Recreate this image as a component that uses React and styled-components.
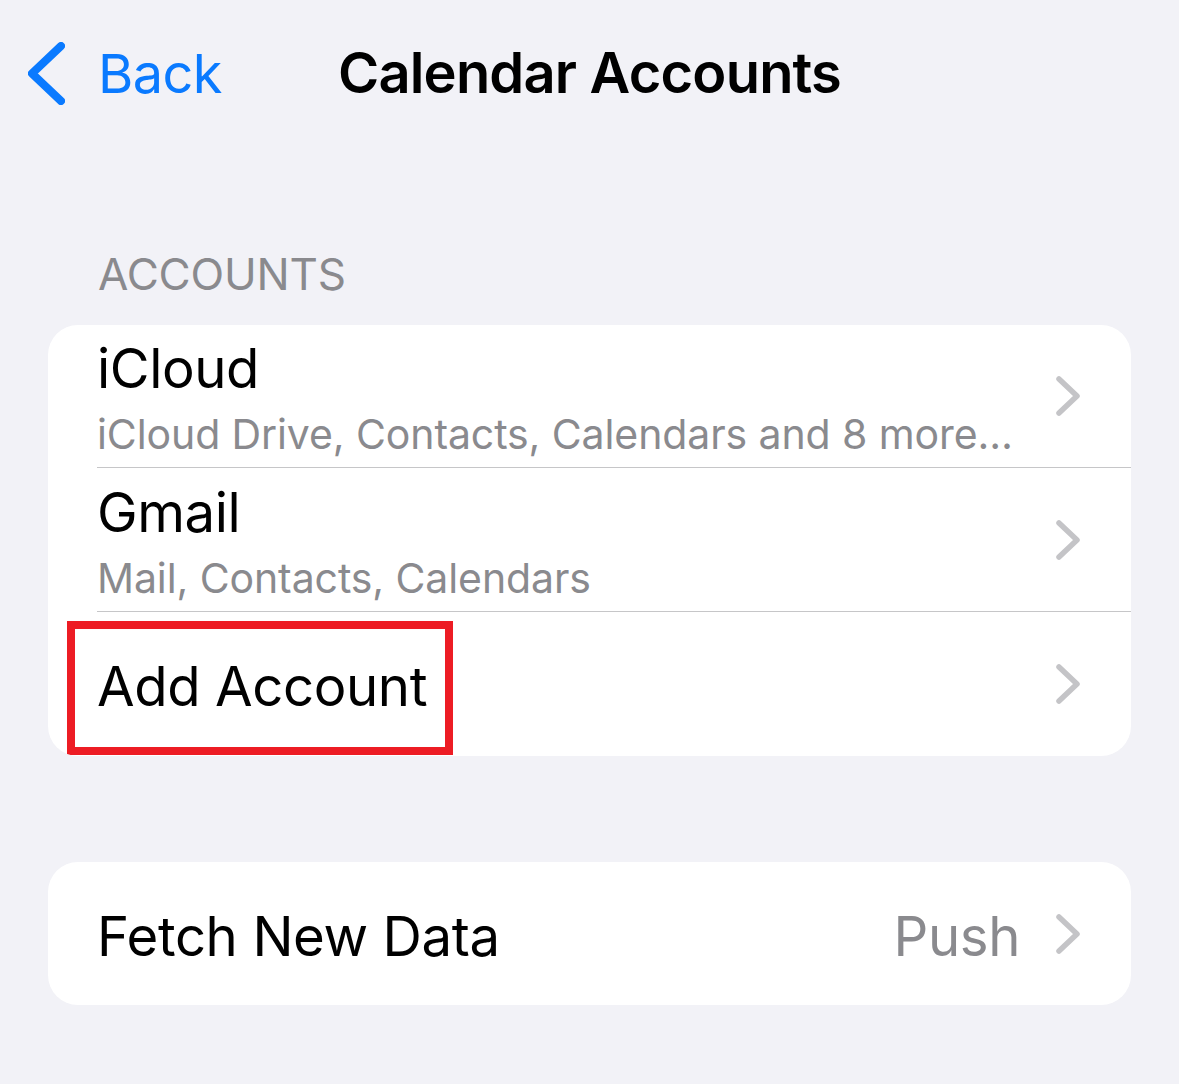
import React from "react";
import styled, { createGlobalStyle } from "styled-components";

const Global = createGlobalStyle`
  html, body {
    margin: 0;
    padding: 0;
    background: #f2f2f7;
  }
  body {
    font-family: Inter, "Noto Sans", "Liberation Sans", sans-serif;
    -webkit-font-smoothing: antialiased;
  }
`;

const Page = styled.div`
  width: 1179px;
  min-height: 1084px;
  background: #f2f2f7;
  display: flex;
  flex-direction: column;
`;

const NavBar = styled.header`
  display: grid;
  grid-template-columns: 1fr auto 1fr;
  align-items: center;
  height: 146px;
`;

const BackButton = styled.button`
  justify-self: start;
  display: flex;
  align-items: center;
  gap: 33px;
  padding: 0 0 0 28px;
  margin: 0;
  border: 0;
  background: none;
  color: #0a7aff;
  font-family: inherit;
  font-size: 54px;
  font-weight: 400;
  letter-spacing: -0.6px;
  cursor: pointer;
`;

const Title = styled.h1`
  margin: 0;
  font-size: 56px;
  font-weight: 600;
  letter-spacing: -0.8px;
  color: #000;
`;

const SectionHeader = styled.div`
  margin: 98px 0 0 98px;
  font-size: 44px;
  line-height: 60px;
  color: #8a8a8e;
  letter-spacing: -0.2px;
`;

const Card = styled.section`
  margin: ${(p) => p.$top}px 48px 0 48px;
  background: #fff;
  border-radius: 30px;
  overflow: hidden;
`;

const Row = styled.div`
  position: relative;
  display: flex;
  padding-left: 49px;
`;

const RowBody = styled.div`
  flex: 1;
  display: flex;
  align-items: center;
  height: ${(p) => p.$h}px;
  padding-right: 50px;
  box-sizing: border-box;
  border-bottom: ${(p) => (p.$divider ? "1.5px solid #c6c6c8" : "none")};
`;

const Texts = styled.div`
  flex: 1;
  min-width: 0;
  display: flex;
  flex-direction: column;
`;

const Label = styled.div`
  padding-top: 4px;
  font-size: 54.5px;
  line-height: 68px;
  color: #000;
  letter-spacing: -0.4px;
`;

const Sub = styled.div`
  margin-top: 4px;
  font-size: 41px;
  line-height: 56px;
  color: #8a8a8e;
  letter-spacing: -0.1px;
  white-space: nowrap;
`;

const Value = styled.span`
  padding-top: 4px;
  font-size: 54.5px;
  line-height: 68px;
  color: #8a8a8e;
  margin-right: 35px;
  letter-spacing: -0.4px;
`;

const Highlight = styled.div`
  position: absolute;
  left: 19px;
  top: 9px;
  width: 386px;
  height: 134px;
  box-sizing: border-box;
  border: 8px solid #ed1c24;
  pointer-events: none;
`;

const BackChevron = () => (
  <svg width="37" height="63" viewBox="0 0 37 63" aria-hidden="true">
    <polyline
      points="33,4 4,31.5 33,59"
      fill="none"
      stroke="#0a7aff"
      strokeWidth="8"
      strokeLinecap="round"
      strokeLinejoin="round"
    />
  </svg>
);

const Disclosure = () => (
  <svg width="26" height="42" viewBox="0 0 26 42" aria-hidden="true">
    <polyline
      points="4,4 22,21 4,38"
      fill="none"
      stroke="#c4c4c7"
      strokeWidth="5.5"
      strokeLinecap="round"
      strokeLinejoin="round"
    />
  </svg>
);

const accounts = [
  { name: "iCloud", detail: "iCloud Drive, Contacts, Calendars and 8 more…", h: 143 },
  { name: "Gmail", detail: "Mail, Contacts, Calendars", h: 144 },
];

export default function App() {
  return (
    <Page>
      <Global />
      <NavBar>
        <BackButton>
          <BackChevron />
          Back
        </BackButton>
        <Title>Calendar Accounts</Title>
        <div />
      </NavBar>

      <SectionHeader>ACCOUNTS</SectionHeader>
      <Card $top={21}>
        {accounts.map((a) => (
          <Row key={a.name}>
            <RowBody $h={a.h} $divider>
              <Texts>
                <Label>{a.name}</Label>
                <Sub>{a.detail}</Sub>
              </Texts>
              <Disclosure />
            </RowBody>
          </Row>
        ))}
        <Row>
          <RowBody $h={144}>
            <Texts>
              <Label>Add Account</Label>
            </Texts>
            <Disclosure />
          </RowBody>
          <Highlight />
        </Row>
      </Card>

      <Card $top={106}>
        <Row>
          <RowBody $h={143}>
            <Texts>
              <Label>Fetch New Data</Label>
            </Texts>
            <Value>Push</Value>
            <Disclosure />
          </RowBody>
        </Row>
      </Card>
    </Page>
  );
}
